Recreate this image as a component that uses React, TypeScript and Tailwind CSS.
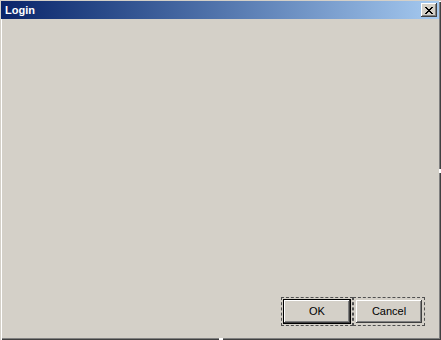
const bevel =
  "shadow-[inset_-1px_-1px_#404040,inset_1px_1px_#ffffff,inset_-2px_-2px_#808080,inset_2px_2px_#d4d0c8]";

const CloseButton = () => (
  <div
    className={`w-[16px] h-[14px] bg-[#d4d0c8] flex items-center justify-center ${bevel}`}
  >
    <svg width="8" height="7" viewBox="0 0 8 7" shapeRendering="crispEdges">
      <path
        d="M0 0h2v1h1v1h2v-1h1v-1h2v1h-1v1h-1v1h-1v1h1v1h1v1h1v1h-2v-1h-1v-1h-2v1h-1v1h-2v-1h1v-1h1v-1h1v-1h-1v-1h-1v-1h-1z"
        fill="#000"
      />
    </svg>
  </div>
);

const DialogButton = ({
  label,
  isDefault,
}: {
  label: string;
  isDefault?: boolean;
}) => (
  <div className="border border-dashed border-[#505050] p-[1px]">
    <div className={isDefault ? "border border-black" : "border border-transparent"}>
      <button
        className={`w-[66px] h-[23px] bg-[#d4d0c8] text-[11px] text-black flex items-center justify-center ${bevel}`}
      >
        {label}
      </button>
    </div>
  </div>
);

export default function App() {
  return (
    <div
      className="relative w-[441px] h-[340px] bg-[#d4d0c8] flex flex-col shadow-[inset_1px_1px_#d4d0c8,inset_2px_2px_#ffffff,inset_-1px_-1px_#404040,inset_-2px_-2px_#808080]"
      style={{ fontFamily: '"Liberation Sans", Arial, sans-serif' }}
    >
      {/* Title bar */}
      <div className="mt-[1px] ml-[1px] mr-[2px] h-[18px] flex items-center justify-between pl-[4px] pr-[2px] bg-gradient-to-r from-[#0a246a] to-[#a6caf0]">
        <span className="text-[11px] font-bold text-white leading-none pt-[1px]">Login</span>
        <CloseButton />
      </div>

      {/* Body */}
      <div className="flex-1 flex items-end justify-end pr-[16px] pb-[14px]">
        <div className="flex">
          <DialogButton label="OK" isDefault />
          <DialogButton label="Cancel" />
        </div>
      </div>

      {/* resize grip marks */}
      <div className="absolute left-[219px] bottom-0 w-[4px] h-[2px] bg-white" />
      <div className="absolute right-0 top-[169px] w-[2px] h-[4px] bg-white" />
    </div>
  );
}
